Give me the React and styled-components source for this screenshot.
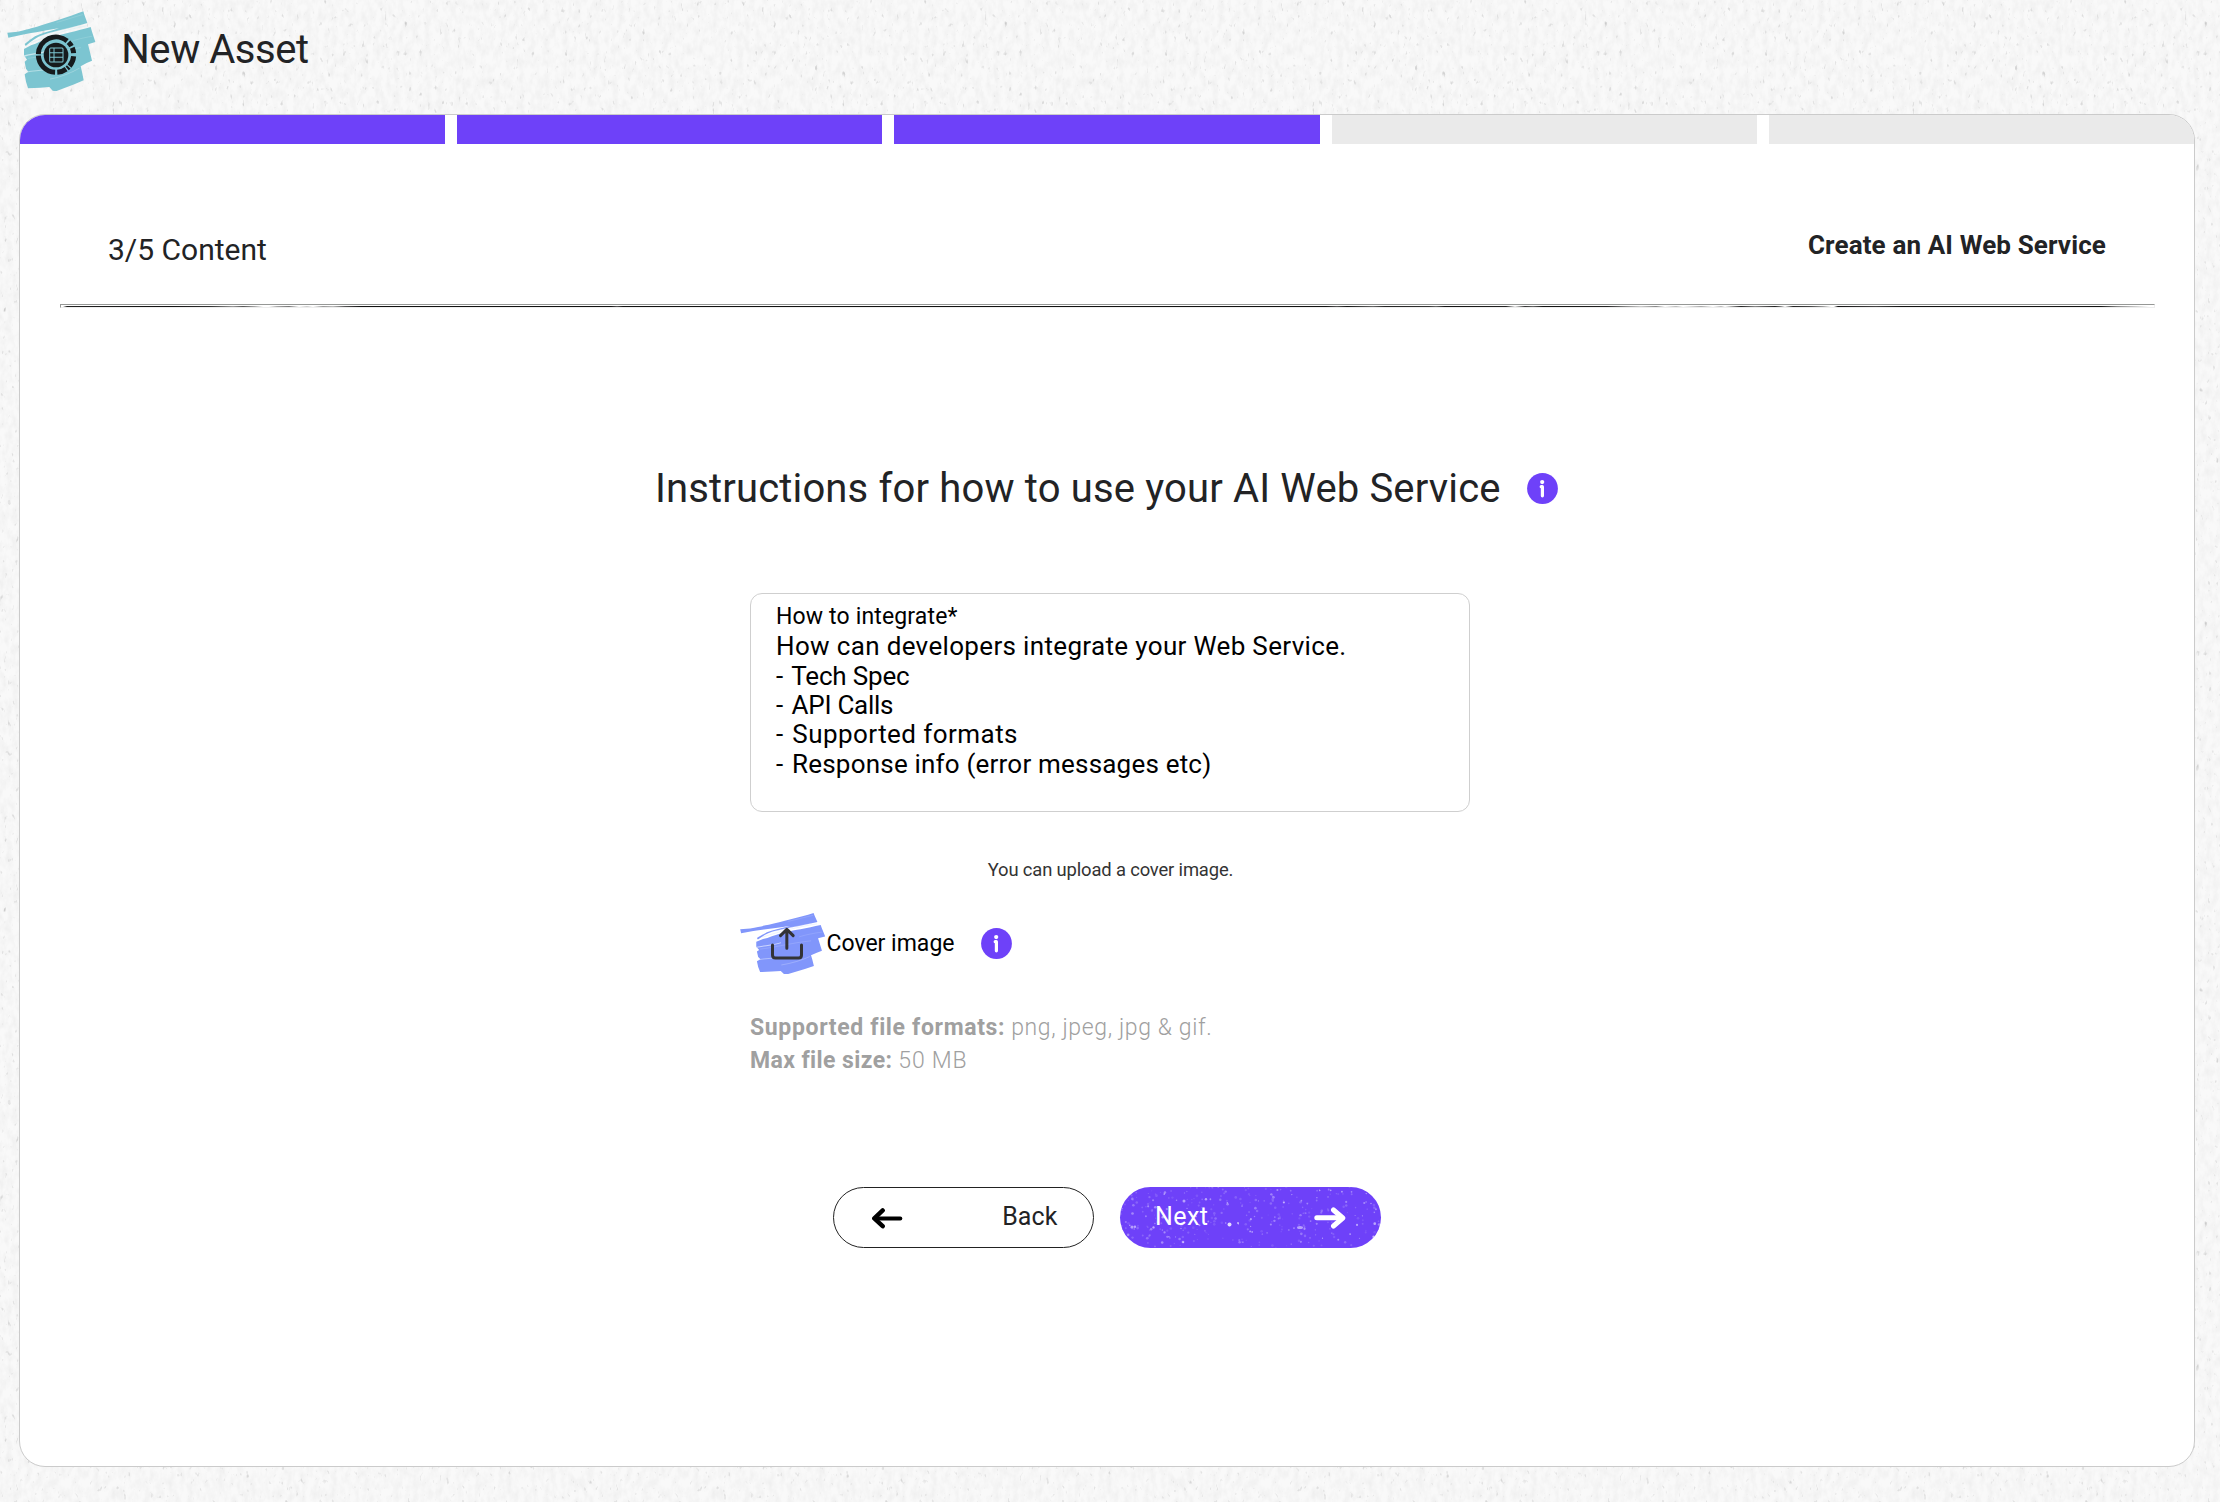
import React from "react";
import styled, { createGlobalStyle } from "styled-components";

const PURPLE = "#6e41f9";
const INK = "#222325";

const paper = encodeURIComponent(
  `<svg xmlns='http://www.w3.org/2000/svg' width='600' height='600'>
    <filter id='soft' x='0' y='0' width='100%' height='100%'>
      <feTurbulence type='fractalNoise' baseFrequency='.16 .09' numOctaves='3' seed='4' stitchTiles='stitch'/>
      <feColorMatrix values='0 0 0 0 0  0 0 0 0 0  0 0 0 0 0  .5 0 0 0 -.19'/>
    </filter>
    <filter id='speck' x='0' y='0' width='100%' height='100%'>
      <feTurbulence type='fractalNoise' baseFrequency='.26 .14' numOctaves='2' seed='11' stitchTiles='stitch'/>
      <feColorMatrix values='0 0 0 0 0  0 0 0 0 0  0 0 0 0 0  3 0 0 0 -2.1'/>
    </filter>
    <rect width='600' height='600' filter='url(#soft)' opacity='.14'/>
    <rect width='600' height='600' filter='url(#speck)' opacity='.24'/>
  </svg>`
).replace(/'/g, "%27");

const GlobalStyle = createGlobalStyle`
  * { box-sizing: border-box; }
  body {
    margin: 0;
    background: #f9f9f9 url("data:image/svg+xml,${paper}");
    font-family: Roboto, "Liberation Sans", sans-serif;
    color: ${INK};
  }
`;

const Page = styled.div`
  display: flex;
  flex-direction: column;
  height: 1502px;
  padding: 0 25px 35px 19px;
`;

const TopBar = styled.header`
  display: flex;
  align-items: flex-start;
  flex: none;
  height: 114px;
  margin-left: -12px;
  padding-top: 10.5px;
  gap: 25.6px;
`;

const PageTitle = styled.h1`
  margin: 15.5px 0 0;
  font-size: 40px;
  line-height: 48px;
  font-weight: 400;
  letter-spacing: -0.45px;
`;

const Card = styled.main`
  flex: 1;
  display: flex;
  flex-direction: column;
  background: #fff;
  border: 1px solid #cbcbcb;
  border-radius: 26px;
  overflow: hidden;
`;

const Steps = styled.div`
  display: grid;
  grid-template-columns: repeat(5, 1fr);
  gap: 12px;
  flex: none;
  height: 29px;
`;

const Step = styled.div`
  background: ${(p) => (p.$done ? PURPLE : "#eaeaea")};
`;

const CardHeader = styled.div`
  display: flex;
  justify-content: space-between;
  flex: none;
  height: 160px;
  padding: 0 88px;
  line-height: 30px;
`;

const StepLabel = styled.div`
  margin-top: 91px;
  font-size: 30px;
  letter-spacing: 0;
`;

const Kind = styled.div`
  margin-top: 86px;
  font-size: 26px;
  font-weight: 700;
  letter-spacing: 0.13px;
`;

const Divider = styled.hr`
  flex: none;
  width: 2095px;
  height: 4px;
  margin: 0 0 0 40px;
  border: 1px solid #eee;
  border-top-color: #969896;
  border-left-color: #969896;
  background:
    linear-gradient(#fff, #fff) 0 0 / 100% 1px no-repeat,
    linear-gradient(90deg,
    #fff 2px, #222 6px, #111 110px, #333 150px, #999 172px, #555 182px, #aaa 194px, #fff 202px, #fff 208px,
    #aaa 216px, #777 228px, #fff 238px, #ccc 246px, #fff 252px, #999 262px, #bbb 272px, #555 284px,
    #111 300px, #111 550px, #555 556px, #111 562px, #111 1265px, #555 1276px, #111 1286px,
    #666 1312px, #222 1324px, #333 1368px, #666 1375px, #111 1384px, #222 1445px, #eee 1454px,
    #333 1464px, #666 1472px, #111 1482px, #222 1546px, #888 1565px, #ccc 1580px, #888 1595px, #fff 1604px,
    #bbb 1615px, #fff 1622px, #aaa 1640px, #fff 1652px, #bbb 1660px, #fff 1664px, #222 1680px,
    #888 1694px, #222 1714px, #888 1720px, #fff 1724px, #222 1732px, #444 1750px, #999 1762px, #fff 1770px,
    #fff 1773px, #111 1777px, #444 1815px, #111 1840px, #111 2040px, #888 2056px, #bbb 2070px, #fff 2088px);
`;

const Body = styled.div`
  display: flex;
  flex-direction: column;
  align-items: center;
  padding-top: 156px;
`;

const HeadingRow = styled.div`
  display: flex;
  align-items: center;
  gap: 26px;
  margin-right: 1.4px;
`;

const Heading = styled.h2`
  margin: 0;
  position: relative;
  top: 0.6px;
  font-size: 40px;
  line-height: 48px;
  font-weight: 400;
  letter-spacing: 0.16px;
  white-space: nowrap;
`;

const Form = styled.div`
  display: flex;
  flex-direction: column;
  width: 720px;
  margin: 81px 0 0 6px;
`;

const Field = styled.div`
  height: 219px;
  padding: 9px 25px;
  border: 1px solid #cfcfcf;
  border-radius: 12px;
  color: #000;
`;

const FieldLabel = styled.div`
  font-size: 23px;
  line-height: 28px;
  letter-spacing: 0.15px;
`;

const FieldText = styled.div`
  margin-top: 1.4px;
  font-size: 26px;
  line-height: 29.33px;
`;

const Line = styled.div`
  letter-spacing: ${(p) => p.$track}px;
`;

const Bullet = styled.span`
  display: inline-block;
  width: 9.4px;
  letter-spacing: 0;
`;

const Hint = styled.p`
  margin: 46px 0 0;
  padding-left: 1px;
  font-size: 18.4px;
  line-height: 24px;
  letter-spacing: -0.15px;
  text-align: center;
  color: #333;
`;

const UploadRow = styled.div`
  display: flex;
  align-items: center;
  height: 60px;
  margin: 31px 0 0 -10.5px;
  color: #000;
`;

const UploadLabel = styled.span`
  margin: 0 26.5px 0 1.5px;
  padding-top: 2px;
  font-size: 23px;
  line-height: 28px;
`;

const Limits = styled.div`
  margin-top: 38px;
  font-size: 23px;
  line-height: 33px;
  color: #a0a0a0;
`;

const Limit = styled.div`
  display: flex;
  gap: 6px;
`;

const LimitName = styled.b`
  font-weight: 700;
  letter-spacing: ${(p) => p.$track}px;
`;

const LimitValue = styled.span`
  font-weight: 300;
  letter-spacing: ${(p) => p.$track}px;
`;

const Actions = styled.div`
  display: flex;
  gap: 26px;
  margin-top: 110px;
`;

const Button = styled.button`
  position: relative;
  display: flex;
  justify-content: space-between;
  align-items: center;
  width: 261px;
  height: 61px;
  padding: ${(p) => (p.$primary ? "0 35.5px 0 35px" : "0 35.5px 0 36.5px")};
  border: ${(p) => (p.$primary ? "0" : "1px solid #222")};
  border-radius: 31px;
  overflow: hidden;
  background: ${(p) => (p.$primary ? PURPLE : "#fff")};
  color: ${(p) => (p.$primary ? "#fff" : INK)};
  font: 400 25px/30px Roboto, "Liberation Sans", sans-serif;
  letter-spacing: ${(p) => (p.$primary ? 0.4 : 0.1)}px;
`;

const ButtonText = styled.span`
  position: relative;
  padding-bottom: 2px;
`;

const ArrowIcon = styled.svg`
  position: relative;
  display: block;
  fill: none;
  stroke: ${(p) => (p.$dark ? "#000" : "#fff")};
  stroke-linecap: round;
  stroke-linejoin: round;
`;

const SpeckleLayer = styled.svg`
  position: absolute;
  inset: 0;
  fill: #fff;
`;

const BlockSvg = styled.svg`
  display: block;
  flex: none;
`;

const InfoSvg = styled(BlockSvg)`
  margin-top: 1px;
`;

function Brush({ color, streak }) {
  return (
    <g>
      <path
        fill={color}
        d="M21 97 L52 94 C80 88 95 82 110 79 C150 67 205 50 249 33 L252 43 L261 68 L240 74 L218 80 C180 90 150 96 128 104 C110 110 92 122 76 137 L73 131 C85 121 94 116 104 108 C125 98 150 92 176 84 C150 88 100 97 62 104 L24 112 Z"
      />
      <path
        fill={color}
        d="M71 146 L92 135 C110 130 128 119 150 111 C185 101 230 92 271 80 L275 94 L285 125 L263 132 L268 152 L275 181 L259 188 L241 198 L245 215 L250 240 L222 252 L166 273 L157 271 L147 260 L120 262 L83 264 L77 244 L73 222 L84 214 L77 205 L73 184 L80 178 L71 165 Z"
      />
      <g fill="none" stroke={streak} strokeLinecap="round">
        <path d="M92 127 C140 106 200 88 258 76" strokeWidth="3" opacity=".6" />
        <path d="M118 108 C160 94 200 84 238 76" strokeWidth="2" opacity=".5" />
        <path d="M72 167 C98 160 120 160 146 150" strokeWidth="4" opacity=".8" />
        <path d="M84 174 C120 170 180 150 240 142" strokeWidth="2" opacity=".35" />
        <path d="M80 215 C102 210 120 212 140 206" strokeWidth="3" opacity=".6" />
        <path d="M150 236 C180 230 212 218 236 204" strokeWidth="3" opacity=".35" />
        <path d="M170 66 C200 58 220 50 246 43" strokeWidth="2" opacity=".3" />
        <path d="M205 126 C225 118 250 112 274 108" strokeWidth="2" opacity=".3" />
      </g>
    </g>
  );
}

const polar = (deg, r) => {
  const a = (deg * Math.PI) / 180;
  return `${(167 + r * Math.cos(a)).toFixed(2)} ${(163 + r * Math.sin(a)).toFixed(2)}`;
};
const arc = (from, to, r = 53) =>
  `M${polar(from, r)} A${r} ${r} 0 ${to - from > 180 ? 1 : 0} 1 ${polar(to, r)}`;

function AssetLogo() {
  return (
    <BlockSvg width="88.7" height="80.7" viewBox="20 32 266 242">
      <Brush color="#7cc5d1" streak="#d8eef2" />
      <g fill="none" stroke="#161b1d" strokeWidth="15">
        <path d={arc(182, 309)} />
        <path d={arc(315, 331)} />
        <path d={arc(337, 355)} />
        <path d={arc(5, 40)} />
        <path d={arc(44, 51)} />
        <path d={arc(55, 86)} />
        <path d={arc(93, 177)} />
      </g>
      <circle cx="167" cy="164" r="37" fill="#161b1d" />
      <g fill="none" stroke="#7cc5d1" strokeWidth="3">
        <rect x="148" y="143" width="40" height="42" rx="3" />
        <path d="M161 143V185M148 157H188M148 171H188" />
      </g>
    </BlockSvg>
  );
}

function UploadIcon() {
  return (
    <BlockSvg width="85.5" height="62" viewBox="27.5 217 256.5 186">
      <g transform="translate(7.7 194.4) scale(.966 .7686)">
        <Brush color="#8196fb" streak="#dde3ff" />
      </g>
      <path
        d="M168 326V270M149 288L168 269L187 288M125 316V346Q125 355 134 355H203Q212 355 212 346V316"
        fill="none"
        stroke="#333336"
        strokeWidth="9"
        strokeLinecap="round"
        strokeLinejoin="round"
      />
    </BlockSvg>
  );
}

function InfoIcon() {
  return (
    <InfoSvg width="31" height="31" viewBox="0 0 31 31">
      <circle cx="15.5" cy="15.5" r="15.4" fill={PURPLE} />
      <circle cx="15.2" cy="9.1" r="2.1" fill="#fff" />
      <path d="M14.2 13.7H15.4V22.8" fill="none" stroke="#fff" strokeWidth="3.2" strokeLinecap="round" strokeLinejoin="round" />
    </InfoSvg>
  );
}

let seed = 29;
const rand = () => {
  seed = (seed * 16807) % 2147483647;
  return seed / 2147483647;
};
const specks = Array.from({ length: 360 }, () => ({
  x: rand() * 261,
  y: rand() * 61,
  r: 0.5 + rand() * 0.85,
  o: 0.1 + rand() * rand() * 0.5,
}));

function Speckles() {
  return (
    <SpeckleLayer width="261" height="61" viewBox="0 0 261 61">
      {specks.map((s, i) => (
        <circle key={i} cx={s.x} cy={s.y} r={s.r} opacity={s.o} />
      ))}
      <circle cx="109.5" cy="37.5" r="2" opacity=".8" />
      <circle cx="118" cy="36" r="1" opacity=".6" />
      <circle cx="12" cy="40" r="1.5" opacity=".5" />
      <circle cx="64" cy="14" r="1.5" opacity=".5" />
      <ellipse cx="180" cy="40.5" rx="3" ry="1.5" opacity=".5" />
      <circle cx="63" cy="55" r="1.3" opacity=".5" />
    </SpeckleLayer>
  );
}

const lines = [
  { text: "Tech Spec", track: -0.17 },
  { text: "API Calls", track: -0.26 },
  { text: "Supported formats", track: 0.44 },
  { text: "Response info (error messages etc)", track: 0.2 },
];

export default function App() {
  return (
    <>
      <GlobalStyle />
      <Page>
        <TopBar>
          <AssetLogo />
          <PageTitle>New Asset</PageTitle>
        </TopBar>
        <Card>
          <Steps>
            {[1, 2, 3, 4, 5].map((n) => (
              <Step key={n} $done={n <= 3} />
            ))}
          </Steps>
          <CardHeader>
            <StepLabel>3/5 Content</StepLabel>
            <Kind>Create an AI Web Service</Kind>
          </CardHeader>
          <Divider />
          <Body>
            <HeadingRow>
              <Heading>Instructions for how to use your AI Web Service</Heading>
              <InfoIcon />
            </HeadingRow>
            <Form>
              <Field>
                <FieldLabel>How to integrate*</FieldLabel>
                <FieldText>
                  <Line $track={0.34}>How can developers integrate your Web Service.</Line>
                  {lines.map((l) => (
                    <Line key={l.text} $track={l.track}>
                      <Bullet>-</Bullet> {l.text}
                    </Line>
                  ))}
                </FieldText>
              </Field>
              <Hint>You can upload a cover image.</Hint>
              <UploadRow>
                <UploadIcon />
                <UploadLabel>Cover image</UploadLabel>
                <InfoIcon />
              </UploadRow>
              <Limits>
                <Limit>
                  <LimitName $track={0.65}>Supported file formats:</LimitName>
                  <LimitValue $track={0.62}>png, jpeg, jpg &amp; gif.</LimitValue>
                </Limit>
                <Limit>
                  <LimitName $track={0.4}>Max file size:</LimitName>
                  <LimitValue $track={0.8}>50 MB</LimitValue>
                </Limit>
              </Limits>
            </Form>
            <Actions>
              <Button>
                <ArrowIcon $dark width="32" height="22" viewBox="0 0 32 22">
                  <path d="M4 11.4H29.3" strokeWidth="4" />
                  <path d="M11.7 3.4L3.3 11.4L11.7 19.2" strokeWidth="4.4" />
                </ArrowIcon>
                <ButtonText>Back</ButtonText>
              </Button>
              <Button $primary>
                <Speckles />
                <ButtonText>Next</ButtonText>
                <ArrowIcon width="32" height="22" viewBox="0 0 32 22">
                  <path d="M2.8 10.8H27" strokeWidth="5" />
                  <path d="M19.5 3L28.8 11L19.5 19" strokeWidth="5" />
                </ArrowIcon>
              </Button>
            </Actions>
          </Body>
        </Card>
      </Page>
    </>
  );
}
